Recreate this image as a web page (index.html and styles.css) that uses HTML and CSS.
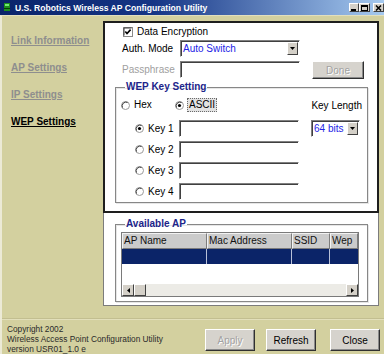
FILE: index.html
```html
<!DOCTYPE html>
<html lang="en">
<head>
<meta charset="utf-8">
<title>U.S. Robotics Wireless AP Configuration Utility</title>
<link rel="stylesheet" href="styles.css">
</head>
<body>
<div class="window">
  <header class="titlebar">
    <svg class="app-icon" width="6" height="8" viewBox="0 0 6 8"><rect x="0" y="0" width="6" height="8" fill="#1c8f1c"/><rect x="1" y="1" width="4" height="2" fill="#74ea74"/><rect x="0" y="5" width="6" height="1" fill="#0b3b0b"/></svg>
    <span class="title">U.S. Robotics Wireless AP Configuration Utility</span>
    <div class="caption-btns">
      <span class="cbtn"><svg width="6" height="6" viewBox="0 0 6 6"><rect x="0" y="4" width="5" height="2" fill="#000"/></svg></span>
      <span class="cbtn"><svg width="7" height="6" viewBox="0 0 7 6"><rect x="0.5" y="0.5" width="6" height="5" fill="none" stroke="#000"/><rect x="0" y="0" width="7" height="2" fill="#000"/></svg></span>
      <span class="cbtn cbtn-close"><svg width="7" height="6" viewBox="0 0 7 6"><path d="M1 0.5L6 5.5M6 0.5L1 5.5" stroke="#000" stroke-width="1.5"/></svg></span>
    </div>
  </header>

  <div class="client">
    <div class="body">
      <nav class="sidebar">
        <a class="nav-link">Link Information</a>
        <a class="nav-link">AP Settings</a>
        <a class="nav-link">IP Settings</a>
        <a class="nav-link active">WEP Settings</a>
      </nav>

      <main class="content">
        <section class="panel panel-wep">
          <div class="form">
            <label class="check-row">
              <svg class="checkbox" width="10" height="10" viewBox="0 0 10 10"><rect x="0.5" y="0.5" width="9" height="9" fill="#fff" stroke="#8a8a8a"/><path d="M1 8.5V1H8.5" fill="none" stroke="#3a3a3a"/><path d="M2.3 4.6L4 6.6L7.6 2.6" fill="none" stroke="#000" stroke-width="1.6"/></svg>
              <span>Data Encryption</span>
            </label>
            <span class="lbl lbl-auth">Auth. Mode</span>
            <div class="select select-auth"><span class="select-text">Auto Switch</span><span class="drop"><svg width="5" height="3" viewBox="0 0 5 3"><path d="M0 0H5L2.5 3Z" fill="#000"/></svg></span></div>
            <span class="lbl lbl-pass">Passphrase</span>
            <div class="input input-pass"></div>
            <button class="btn btn-done" disabled>Done</button>
          </div>

          <fieldset class="group group-wep">
            <legend>WEP Key Setting</legend>
            <div class="mode-row">
              <label class="opt opt-hex">
                <svg class="radio" width="9" height="9" viewBox="0 0 9 9"><circle cx="4.5" cy="4.5" r="4" fill="#fff" stroke="#9a9a9a"/><path d="M1.4 6.6A4 4 0 0 1 6.6 1.4" fill="none" stroke="#404040"/></svg>
                <span>Hex</span>
              </label>
              <label class="opt">
                <svg class="radio" width="9" height="9" viewBox="0 0 9 9"><circle cx="4.5" cy="4.5" r="4" fill="#fff" stroke="#9a9a9a"/><path d="M1.4 6.6A4 4 0 0 1 6.6 1.4" fill="none" stroke="#404040"/><circle cx="4.5" cy="4.5" r="1.6" fill="#000"/></svg>
                <span class="focus-label">ASCII</span>
              </label>
              <span class="keylen-label">Key Length</span>
            </div>

            <div class="key-grid">
              <label class="opt key-opt">
                <svg class="radio" width="9" height="9" viewBox="0 0 9 9"><circle cx="4.5" cy="4.5" r="4" fill="#fff" stroke="#9a9a9a"/><path d="M1.4 6.6A4 4 0 0 1 6.6 1.4" fill="none" stroke="#404040"/><circle cx="4.5" cy="4.5" r="1.6" fill="#000"/></svg>
                <span>Key 1</span>
              </label>
              <div class="input key-input"></div>
              <div class="select key-len"><span class="select-text">64 bits</span><span class="drop"><svg width="5" height="3" viewBox="0 0 5 3"><path d="M0 0H5L2.5 3Z" fill="#000"/></svg></span></div>

              <label class="opt key-opt">
                <svg class="radio" width="9" height="9" viewBox="0 0 9 9"><circle cx="4.5" cy="4.5" r="4" fill="#fff" stroke="#9a9a9a"/><path d="M1.4 6.6A4 4 0 0 1 6.6 1.4" fill="none" stroke="#404040"/></svg>
                <span>Key 2</span>
              </label>
              <div class="input key-input"></div>

              <label class="opt key-opt">
                <svg class="radio" width="9" height="9" viewBox="0 0 9 9"><circle cx="4.5" cy="4.5" r="4" fill="#fff" stroke="#9a9a9a"/><path d="M1.4 6.6A4 4 0 0 1 6.6 1.4" fill="none" stroke="#404040"/></svg>
                <span>Key 3</span>
              </label>
              <div class="input key-input"></div>

              <label class="opt key-opt">
                <svg class="radio" width="9" height="9" viewBox="0 0 9 9"><circle cx="4.5" cy="4.5" r="4" fill="#fff" stroke="#9a9a9a"/><path d="M1.4 6.6A4 4 0 0 1 6.6 1.4" fill="none" stroke="#404040"/></svg>
                <span>Key 4</span>
              </label>
              <div class="input key-input"></div>
            </div>
          </fieldset>
        </section>

        <section class="panel panel-ap">
          <fieldset class="group group-ap">
            <legend>Available AP</legend>
            <div class="listview">
              <div class="lv-row lv-head">
                <span class="lv-cell">AP Name</span>
                <span class="lv-cell">Mac Address</span>
                <span class="lv-cell">SSID</span>
                <span class="lv-cell">Wep</span>
              </div>
              <div class="lv-row lv-sel">
                <span class="lv-cell"></span>
                <span class="lv-cell"></span>
                <span class="lv-cell"></span>
                <span class="lv-cell"></span>
              </div>
              <div class="lv-empty"></div>
              <div class="hscroll">
                <span class="sbtn"><svg width="3" height="5" viewBox="0 0 3 5"><path d="M3 0V5L0 2.5Z" fill="#000"/></svg></span>
                <span class="sthumb"></span>
                <span class="strack"></span>
                <span class="sbtn"><svg width="3" height="5" viewBox="0 0 3 5"><path d="M0 0V5L3 2.5Z" fill="#000"/></svg></span>
              </div>
            </div>
          </fieldset>
        </section>
      </main>
    </div>

    <footer class="footer">
      <div class="copyright">
        <div>Copyright 2002</div>
        <div>Wireless Access Point Configuration Utility</div>
        <div>version USR01_1.0 e</div>
      </div>
      <div class="footer-buttons">
        <button class="btn btn-footer" disabled>Apply</button>
        <button class="btn btn-footer">Refresh</button>
        <button class="btn btn-footer btn-close">Close</button>
      </div>
    </footer>
  </div>
</div>
</body>
</html>
```

FILE: styles.css
```css
* { box-sizing: border-box; }

html, body {
  margin: 0;
  padding: 0;
}

body {
  width: 384px;
  height: 354px;
  overflow: hidden;
  background: #d3d09f;
  font-family: "Liberation Sans", Arial, sans-serif;
  font-size: 10px;
  color: #000;
}

.window {
  width: 384px;
  height: 354px;
  display: flex;
  flex-direction: column;
}

/* ---------- title bar ---------- */
.titlebar {
  height: 15px;
  flex: none;
  display: flex;
  align-items: center;
  padding-left: 4px;
  background: linear-gradient(to right, #0a246a 0%, #153586 40%, #a6caf0 100%);
  color: #fff;
}

.app-icon {
  flex: none;
  margin-right: 5px;
  margin-top: -1px;
}

.title {
  font-weight: bold;
  font-size: 8.6px;
  white-space: nowrap;
  line-height: 12px;
}

.caption-btns {
  margin-left: auto;
  display: flex;
  align-self: flex-start;
  margin-top: 3px;
}

.cbtn {
  width: 10px;
  height: 9px;
  display: flex;
  align-items: center;
  justify-content: center;
  background: #d4d0c8;
  border: 1px solid;
  border-color: #fff #404040 #404040 #fff;
}

.cbtn + .cbtn { width: 11px; }

.cbtn-close {
  margin-left: 3px;
  width: 11px;
}

/* ---------- client area ---------- */
.client {
  flex: 1;
  display: flex;
  flex-direction: column;
  border-left: 2px solid #ecead6;
  border-top: 1px solid #e2dfbe;
}

.body {
  display: flex;
  height: 290px;
  flex: none;
}

.sidebar {
  width: 101px;
  flex: none;
  display: flex;
  flex-direction: column;
  gap: 15px;
  padding-top: 19px;
  padding-left: 9px;
}

.nav-link {
  display: block;
  font-weight: bold;
  font-size: 10px;
  line-height: 12px;
  color: #8e8e8e;
  text-decoration: underline;
  white-space: nowrap;
}

.nav-link.active { color: #000; }

.content {
  width: 276px;
  flex: none;
  padding-top: 5px;
  display: flex;
  flex-direction: column;
}

.panel { background: #fff; }

.panel-wep {
  height: 192px;
  border: 2px solid #1e1e1e;
}

.panel-ap {
  height: 93px;
  border: 1px solid #7c7c7c;
  border-top: none;
  padding-top: 5px;
}

/* ---------- form ---------- */
.form {
  display: grid;
  grid-template-columns: 58px 120px 12px 52px;
  grid-template-rows: 12px 17px 21px;
  row-gap: 2px;
  padding: 3px 0 0 17px;
}

.check-row {
  grid-column: 1 / -1;
  grid-row: 1;
  display: flex;
  align-items: center;
  gap: 4px;
  padding-left: 1px;
  line-height: 12px;
}

.checkbox { flex: none; }

.lbl {
  grid-column: 1;
  white-space: nowrap;
}

.lbl-auth {
  grid-row: 2;
  line-height: 17px;
}

.lbl-pass {
  grid-row: 3;
  color: #a0a0a0;
  line-height: 17px;
  padding-top: 2px;
}

.select-auth {
  grid-column: 2;
  grid-row: 2;
  height: 17px;
}

.input-pass {
  grid-column: 2;
  grid-row: 3;
  background: #c6c6c6;
  margin-top: 2px;
}

.btn-done {
  grid-column: 4;
  grid-row: 3;
  width: 52px;
  height: 18px;
  margin-top: 2px;
}

.select {
  display: flex;
  align-items: stretch;
  background: #fff;
  border: 1px solid;
  border-color: #808080 #fff #fff #808080;
  box-shadow: inset 1px 1px 0 #404040;
  padding: 1px;
}

.select-text {
  flex: 1;
  color: #2323e6;
  padding-left: 1px;
  line-height: 13px;
  white-space: nowrap;
  overflow: hidden;
}

.drop {
  width: 11px;
  flex: none;
  display: flex;
  align-items: center;
  justify-content: center;
  background: #d4d0c8;
  border: 1px solid;
  border-color: #fff #404040 #404040 #fff;
}

.input {
  height: 17px;
  background: #fff;
  border: 1px solid;
  border-color: #808080 #fff #fff #808080;
  box-shadow: inset 1px 1px 0 #404040;
}

.btn {
  font-family: "Liberation Sans", Arial, sans-serif;
  font-size: 10px;
  color: #000;
  background: #d6d3cd;
  border: 1px solid;
  border-color: #fff #303030 #303030 #fff;
  box-shadow: inset -1px -1px 0 #8a8a8a;
  padding: 0;
}

.btn:disabled {
  color: #a2a2a2;
  text-shadow: 1px 1px 0 #fff;
}

/* ---------- group boxes ---------- */
.group {
  margin: 0;
  min-width: 0;
  border: 1px solid #878787;
  box-shadow: 1px 1px 0 #e6e6e6, inset 1px 1px 0 #e6e6e6;
}

.group legend {
  padding: 0 1px;
  margin-left: 4px;
  font-weight: bold;
  font-size: 10px;
  line-height: 12px;
  color: #1c248a;
}

.group-wep {
  width: 253px;
  margin: 1px 0 0 10px;
  padding: 0 5px 2px 5px;
}

.mode-row {
  display: flex;
  align-items: center;
  height: 14px;
  margin-top: 5px;
}

.opt {
  display: flex;
  align-items: center;
  gap: 4px;
  white-space: nowrap;
  line-height: 12px;
}

.opt-hex { width: 54px; }

.radio { flex: none; }

.focus-label {
  margin-left: -1px;
  padding: 0 1px;
  border: 1px dotted #6a6a6a;
  background: #e2e2e2;
  line-height: 12px;
}

.keylen-label {
  margin-left: auto;
  white-space: nowrap;
}

.key-grid {
  display: grid;
  grid-template-columns: 58px 120px 12px 49px;
  grid-auto-rows: 17px;
  row-gap: 4px;
  margin-top: 8px;
}

.key-opt {
  grid-column: 1;
  padding-left: 14px;
}

.key-input { grid-column: 2; }

.key-len {
  grid-column: 4;
  grid-row: 1;
  height: 17px;
}

/* ---------- available AP ---------- */
.group-ap {
  width: 253px;
  margin: 0 0 0 11px;
  padding: 0 5px 4px 5px;
}

.listview {
  width: 238px;
  height: 65px;
  margin-top: 2px;
  border: 1px solid #7a7a7a;
  background: #fff;
  display: flex;
  flex-direction: column;
}

.lv-row {
  display: grid;
  grid-template-columns: 85px 85px 38px 28px;
}

.lv-head .lv-cell {
  height: 16px;
  line-height: 14px;
  padding-left: 1px;
  background: #cbcbcb;
  border-top: 1px solid #f2f2f2;
  border-left: 1px solid #f2f2f2;
  border-right: 1px solid #7c7c7c;
  border-bottom: 1px solid #7c7c7c;
  color: #111;
  white-space: nowrap;
  overflow: hidden;
}

.lv-sel .lv-cell {
  height: 15px;
  background: #0b2468;
  border-right: 1px solid #b8c0d8;
}

.lv-sel .lv-cell:last-child { border-right: none; }

.lv-empty { height: 20px; }

.hscroll {
  height: 12px;
  display: flex;
  background: #ecebe6;
}

.sbtn {
  width: 12px;
  flex: none;
  display: flex;
  align-items: center;
  justify-content: center;
  background: #d4d0c8;
  border: 1px solid;
  border-color: #fff #404040 #404040 #fff;
}

.sthumb {
  width: 12px;
  flex: none;
  background: #d4d0c8;
  border: 1px solid;
  border-color: #fff #404040 #404040 #fff;
}

.strack { flex: 1; }

/* ---------- footer ---------- */
.footer {
  flex: 1;
  margin-top: 12px;
  border-top: 1px solid #c2be90;
  box-shadow: inset 0 1px 0 #e2dfbb;
  display: flex;
  justify-content: space-between;
  align-items: flex-start;
  padding: 5px 4px 0 5px;
}

.copyright {
  font-size: 8.3px;
  line-height: 10px;
  color: #2a2a2a;
  white-space: nowrap;
}

.footer-buttons {
  display: flex;
  gap: 11px;
  margin-top: 5px;
}

.btn-footer {
  width: 50px;
  height: 22px;
}

.btn-close { margin-left: 3px; }
```
